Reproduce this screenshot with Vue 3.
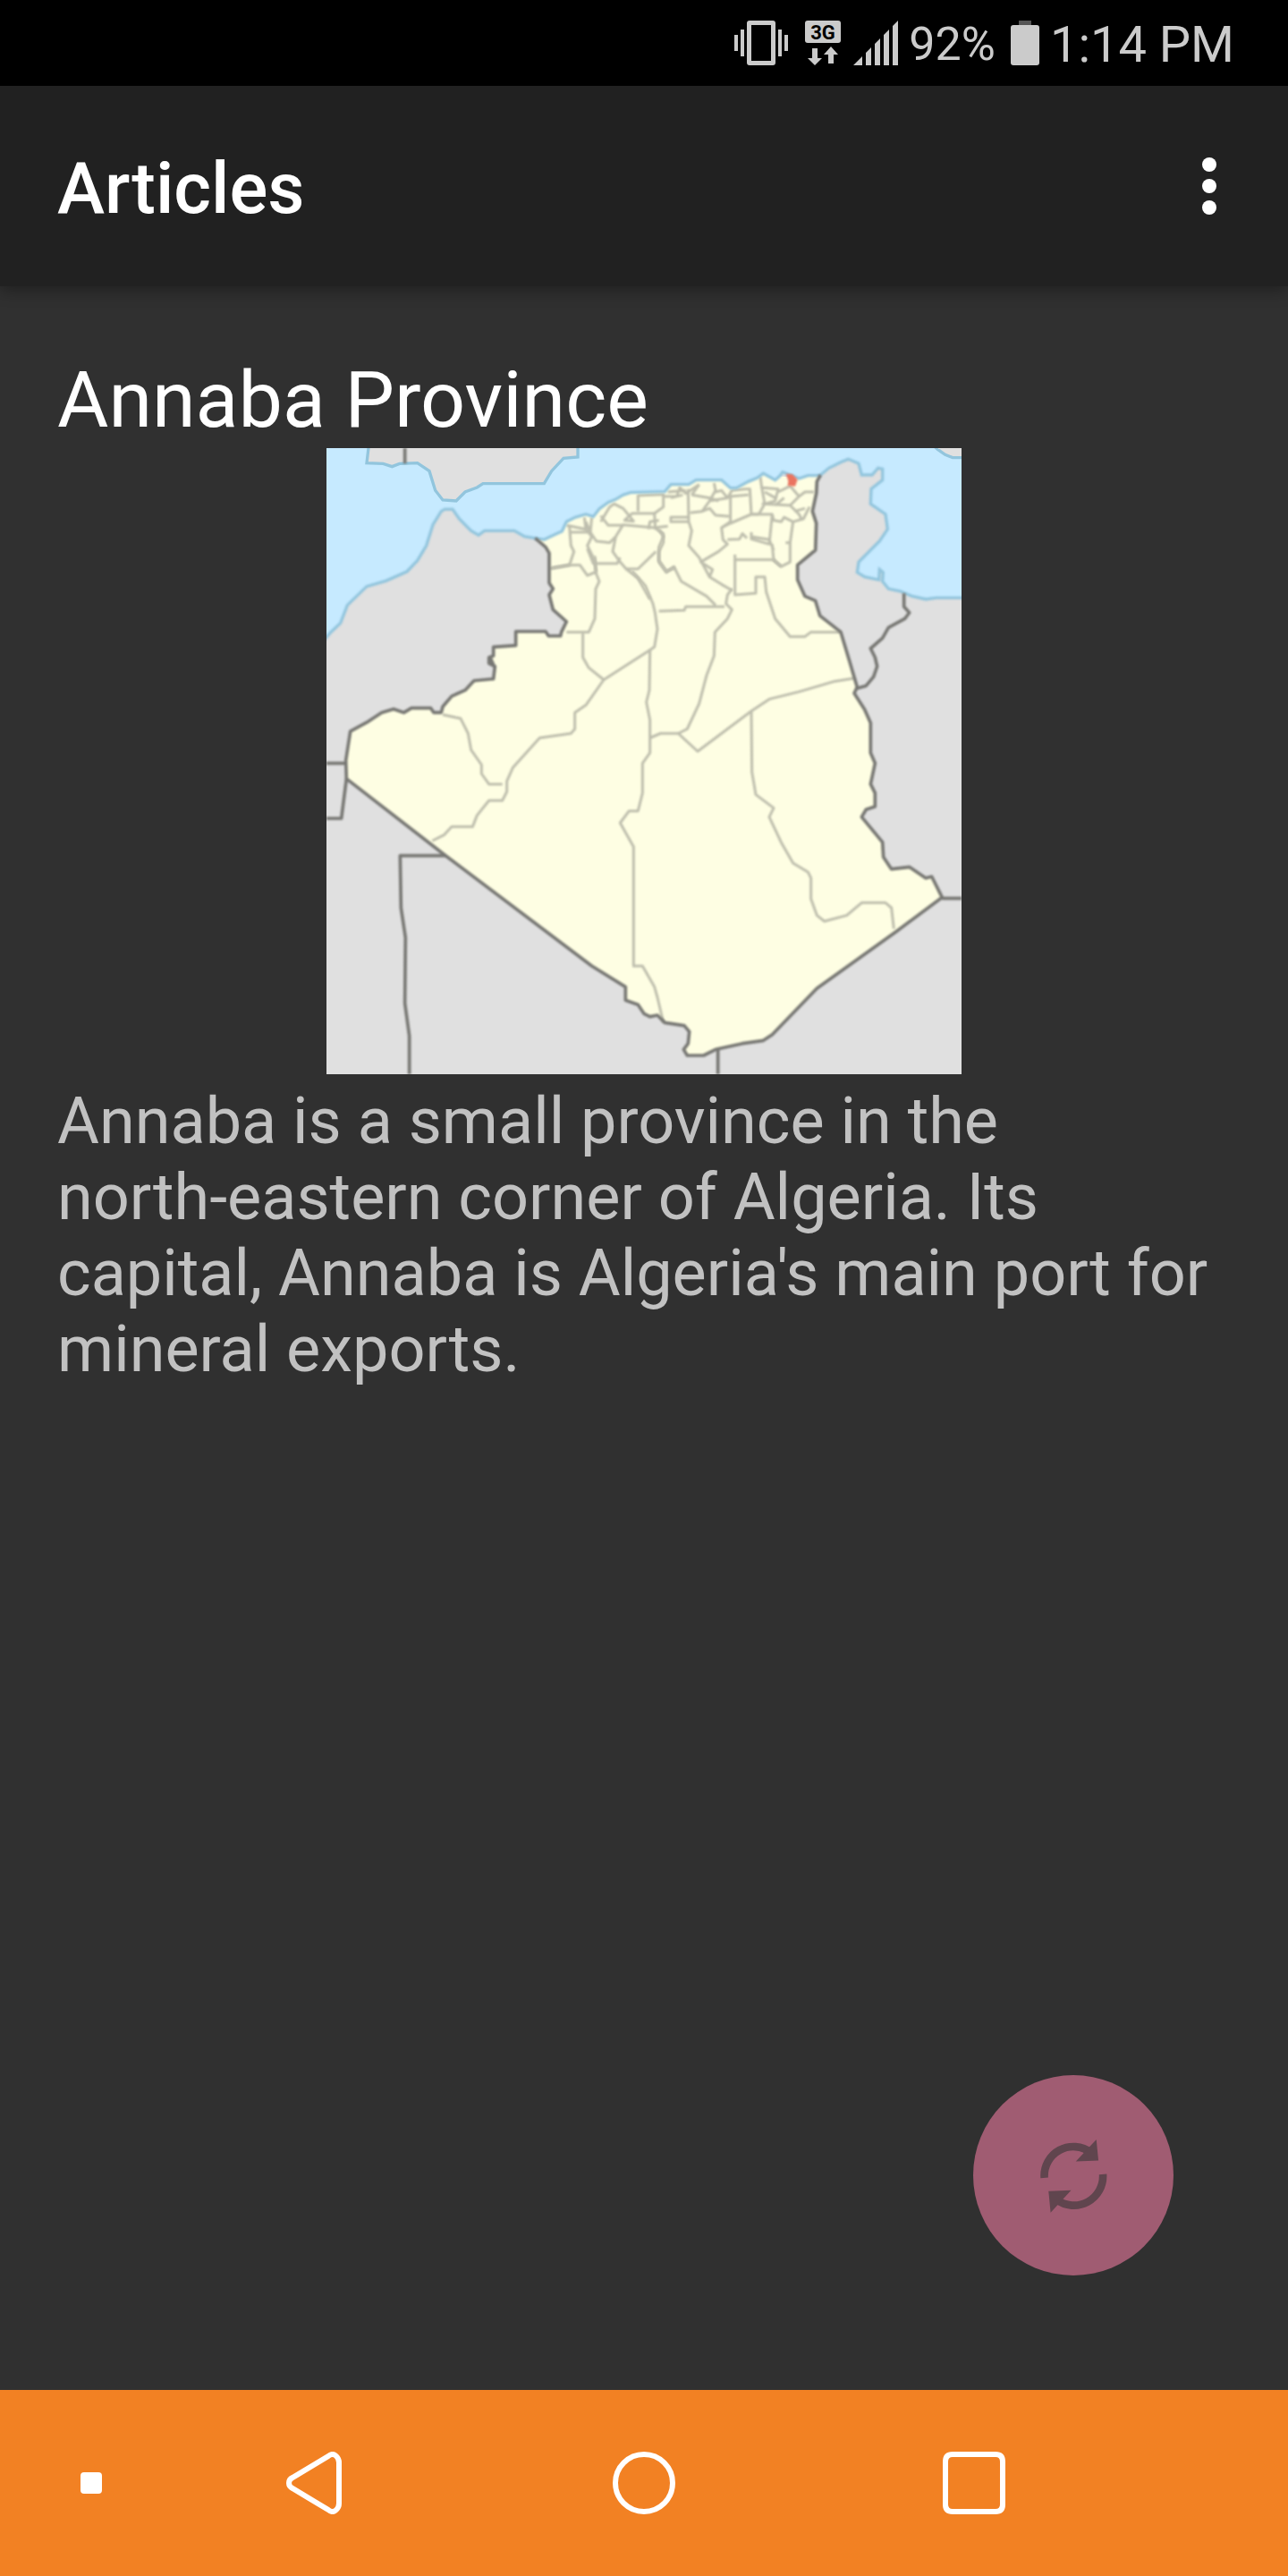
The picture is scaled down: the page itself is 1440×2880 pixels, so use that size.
<template>
  <div class="screen">
    <div class="status-bar">
      <svg class="vibrate" viewBox="0 0 60 50" aria-hidden="true">
        <path d="M0 16h4v18H0zM7 10h4v30H7zM49 10h4v30h-4zM56 16h4v18h-4z" />
        <path fill-rule="evenodd" d="M17 0H43Q46 0 46 3V47Q46 50 43 50H17Q14 50 14 47V3Q14 0 17 0ZM19 5V45H41V5Z" />
      </svg>
      <svg class="network" viewBox="0 0 40 50" aria-hidden="true">
        <rect width="40" height="25" rx="3" />
        <text x="20" y="21" text-anchor="middle">3G</text>
        <path d="M8 31H14V42H19L11 50L3 42H8ZM26 48V38H21L29 29L37 38H32V48Z" />
      </svg>
      <svg class="signal" viewBox="0 0 50 50" aria-hidden="true">
        <path d="M0 50L10 40V50ZM14 50V36L20 30V50ZM24 50V26L30 20V50ZM34 50V16L40 10V50ZM44 50V6L50 0V50Z" />
      </svg>
      <span class="percent">92%</span>
      <svg class="battery" viewBox="0 0 32 50" aria-hidden="true">
        <path class="battery-tip" d="M9 0H23V5H9Z" />
        <rect y="5" width="32" height="45" rx="3" />
      </svg>
      <span class="time">1:14 PM</span>
    </div>

    <header class="app-bar">
      <h1>Articles</h1>
      <button class="menu" type="button" aria-label="More options">
        <span></span>
        <span></span>
        <span></span>
      </button>
    </header>

    <main class="article">
      <h2>{{ article.title }}</h2>
      <svg class="map" viewBox="15 18 2130 2100" role="img" aria-label="Map of Algeria">
        <rect class="land" x="15" y="18" width="2130" height="2100" />
        <path class="sea" :d="`${westCoast}${algeriaCoast}${eastCoast}V0H0Z`" />
        <path
          class="land coast"
          d="M158 0L150 68L205 70L235 80L260 70L320 68L360 95L380 160L405 192L450 195L480 165L520 150L540 137H745L770 95L810 52L858 48V0Z"
        />
        <path class="land coast" d="M2040 0L2065 22L2090 40L2115 50H2160V0Z" />
        <path class="algeria" :d="`M715 320${algeriaCoast}L1560 115L1600 120L1630 110L1672 108${algeriaBorder}Z`" />
        <g class="province">
          <path d="M765 422L830 410H865L890 445L915 435" />
          <path d="M915 380L918 435L930 465L918 490L915 590L895 635H820" />
          <path d="M875 640V720L895 755L945 795" />
          <path d="M605 1145H560L535 1110V1080L500 1030L490 975L465 925L405 912" />
          <path d="M370 1335L410 1315L435 1288H505L520 1250L560 1200H605L620 1170V1135L640 1090L730 990L835 975L848 960V905L885 880L945 795L1100 695" />
          <path d="M1040 430L1085 480L1110 540L1117 570L1125 625L1115 685L1100 695L1098 830L1088 870L1100 930V1040L1075 1075V1175L1060 1235H1030L1000 1275L1045 1355V1755H1075L1115 1825L1125 1860L1145 1945" />
          <path d="M1100 990L1135 975H1195L1260 1035L1440 900L1500 860L1600 835L1720 800L1785 790" />
          <path d="M1440 900L1442 1105L1455 1180L1515 1225L1500 1255L1540 1340L1580 1410L1630 1440L1640 1460V1530L1660 1585L1685 1605L1760 1585L1810 1543H1890L1910 1560L1918 1630" />
          <path d="M1195 975L1225 960L1265 875L1290 780L1315 715L1318 635L1360 590L1375 560L1355 540L1360 510L1375 490" />
          <path d="M1130 565L1215 562L1220 550H1350" />
          <path d="M1385 375V510L1455 505V450H1485L1490 500L1520 590L1570 650H1620L1640 635H1740" />
          <path d="M1385 392H1515L1540 415" />
          <path d="M1130 290L1145 315L1130 350V400L1155 435L1180 415L1205 465L1290 515L1320 545" />
        </g>
        <g class="province" transform="translate(720 15)">
          <path d="M110 265L115 330L125 350L110 395L50 405" />
          <path d="M100 262L165 275L160 235M110 285H180L165 250" />
          <path d="M165 275L185 300L170 330L195 380L200 420" />
          <path d="M185 235L180 285L200 315L245 320L265 300L290 260L395 270L440 265" />
          <path d="M265 300L255 350L280 385L300 408H340L400 350" />
          <path d="M170 340L190 390H270L280 370" />
          <path d="M215 230L240 262L290 262" />
          <path d="M215 250L245 200L260 190L290 205L325 248L295 245L320 222L395 222L398 275" />
          <path d="M340 215V162L425 158V200L395 222M375 275L380 250L410 245" />
          <path d="M425 165L470 165L480 135L500 155L545 125M440 150L500 145M450 170L490 160" />
          <path d="M508 140L510 250L520 280L510 330L545 370L580 435" />
          <path d="M510 235H450V250H510" />
          <path d="M395 270L425 290V320L410 350V380L435 415L465 405" />
          <path d="M300 408L340 440L380 510" />
          <path d="M515 220L555 215L580 180L600 145L595 120M520 160L545 125M580 180L640 170L620 145L600 150" />
          <path d="M520 160L580 170L610 180M555 215L580 205L600 228L645 232M650 160V250" />
          <path d="M650 250L620 270L625 310L640 325L610 350L550 385L590 410L580 435L620 460L655 480" />
          <path d="M620 270L650 255L720 225H790L780 325L720 308V285" />
          <path d="M640 310L680 308L690 290L705 305M720 300L780 310L795 345" />
          <path d="M640 170L655 145L700 140L715 140L720 225L745 225M650 165L710 160" />
          <path d="M750 100L755 135L765 190L800 180L810 140L750 135M765 150L800 170" />
          <path d="M755 190L850 195L880 225L890 245M745 225L765 190M800 195L830 170" />
          <path d="M810 150L850 130L880 165L900 150H930M880 165L850 195M865 215L900 205" />
          <path d="M790 225L795 245L820 250L830 235L860 250L850 320V385L820 400L795 380L790 325" />
          <path d="M860 250L895 240L915 200M835 320H850" />
        </g>
        <path class="coast line" :d="`${westCoast}${algeriaCoast}${eastCoast}`" />
        <g class="border">
          <path :d="`M1672 108${algeriaBorder}`" />
          <path d="M565 722L575 745M278 18V70" />
          <path d="M15 1075H80M82 1127L65 1260H15" />
          <path d="M415 1385H262L265 1560L280 1660L278 1880L293 1990V2118" />
          <path d="M1328 2035V2118M2080 1528H2145" />
          <path d="M1952 505V550L1970 570L1955 590L1900 620L1880 655L1840 690L1855 720L1862 750L1850 785L1825 815L1790 825" />
        </g>
        <path class="annaba" d="M1556 104L1578 106L1595 124L1587 146L1562 144L1564 128Z" />
      </svg>
      <p>
        Annaba is a small province in the<br>
        north-eastern corner of Algeria. Its capital, Annaba is Algeria's main port for mineral exports.
      </p>
      <button class="refresh" type="button" aria-label="Next article">
        <svg viewBox="312 300 224 250">
          <path class="arc" d="M325 432A98 98 0 0 1 482 347" />
          <path d="M500 303L507 374L431 377Z" />
          <path class="arc" d="M522 420A98 98 0 0 1 365 505" />
          <path d="M346 549L339 477L415 474Z" />
        </svg>
      </button>
    </main>

    <nav class="nav-bar">
      <button class="dot" type="button" aria-label="Hide navigation bar">
        <span></span>
      </button>
      <button v-for="item in navItems" :key="item.label" type="button" :aria-label="item.label">
        <svg :viewBox="`0 0 ${item.width} 70`">
          <path :d="item.path" />
        </svg>
      </button>
    </nav>
  </div>
</template>

<script setup>
import { ref } from 'vue'

const article = ref({
  title: 'Annaba Province'
})

// Morocco, up to the Algerian border
const westCoast = 'M0 670L30 635L62 605L85 545L150 482L215 463L285 432L320 395L350 345L372 275L400 230L412 223H438L460 255L500 295L525 310L545 295H645L680 315'
const algeriaCoast = 'L745 325L780 308L805 297L820 265L850 250L885 240L910 248L930 222L960 200L985 190L1010 175L1035 167L1150 164L1170 140H1230L1255 125H1340L1370 152H1390L1430 130L1460 118L1480 103L1520 125L1535 112'
// Tunisia and Libya
const eastCoast = 'L1545 98L1600 120L1630 110H1670L1700 85L1740 65L1765 55L1800 70L1810 108H1845L1865 85L1880 88V125L1842 155L1840 205L1890 240L1897 290L1870 330L1800 400L1795 435L1820 450L1868 460L1870 425L1882 435L1880 465L1900 490L1940 498L1980 515L2025 525L2060 520H2160'
const algeriaBorder = 'L1660 130L1658 170L1645 230L1658 270L1655 360L1595 410V460L1620 515L1655 530L1670 580L1740 635L1770 735L1795 820L1785 840L1820 895L1840 940V1040L1855 1075L1840 1145L1855 1175V1220L1825 1230L1810 1255L1880 1340L1883 1390L1910 1430L1970 1423L2025 1460L2045 1455L2080 1525L1925 1640L1660 1830L1510 1985L1480 2005L1410 2015L1320 2035L1280 2055H1225L1213 2035L1228 2015L1232 1975L1215 1955L1150 1945L1125 1920L1100 1925L1080 1915L1060 1885L1018 1870V1825L905 1755L415 1385L82 1127L80 1065L95 968L150 938L200 905L240 893L275 905L300 890H365L375 905H400L405 885L435 850L480 830L510 798L575 792L580 750L560 740V720L575 715V685L650 680V633H750L760 648H800L803 635L820 600L775 560L762 510L775 490L762 470V370L750 350L715 320'

const navItems = [
  {
    label: 'Back',
    width: 62,
    path: 'M47 5Q52 1 56 5Q59 8 59 12V58Q59 62 56 65Q52 69 47 65L7 41Q3 39 3 35Q3 31 7 29Z'
  },
  {
    label: 'Home',
    width: 70,
    path: 'M35 3A32 32 0 0 1 35 67A32 32 0 0 1 35 3Z'
  },
  {
    label: 'Recent apps',
    width: 70,
    path: 'M11 3H59Q67 3 67 11V59Q67 67 59 67H11Q3 67 3 59V11Q3 3 11 3Z'
  }
]
</script>

<style>
body {
  margin: 0;
  background-color: #303030;
}
</style>

<style scoped>
.screen {
  display: flex;
  flex-direction: column;
  min-height: 100vh;
  background-color: #303030;
  font-family: Roboto, sans-serif;
}
button {
  display: flex;
  justify-content: center;
  align-items: center;
  margin: 0;
  padding: 0;
  border: none;
  background: none;
  cursor: pointer;
}
.status-bar {
  display: flex;
  justify-content: flex-end;
  align-items: center;
  height: 96px;
  padding-right: 60px;
  background-color: #000;
  color: #cbcbcb;
}
.status-bar svg {
  height: 50px;
  fill: #cbcbcb;
}
.status-bar span {
  padding-top: 3px;
}
.vibrate {
  width: 60px;
  margin-right: 19px;
}
.network {
  width: 40px;
  margin-right: 14px;
}
.network text {
  fill: #000;
  font-size: 22px;
  font-weight: 700;
}
.signal {
  width: 50px;
  margin-right: 12px;
}
.percent {
  margin-right: 17px;
  font-size: 52px;
}
.battery {
  width: 32px;
  margin-right: 12px;
}
.status-bar .battery-tip {
  fill: #555;
}
.time {
  font-size: 56px;
}
.app-bar {
  display: flex;
  justify-content: space-between;
  align-items: center;
  height: 224px;
  padding: 0 64px;
  background-color: #212121;
  box-shadow: 0 6px 16px rgba(0, 0, 0, 0.3);
}
h1 {
  margin: 0;
  padding-top: 6px;
  color: #fff;
  font-size: 80px;
  font-weight: 500;
}
.menu {
  flex-direction: column;
  gap: 8px;
  width: 48px;
  height: 96px;
}
.menu span {
  width: 16px;
  height: 16px;
  border-radius: 50%;
  background-color: #fff;
}
.article {
  position: relative;
  flex: 1;
  padding: 75px 64px 380px;
}
h2 {
  margin: 0 0 2px;
  color: #fff;
  font-size: 88px;
  font-weight: 400;
  line-height: 104px;
}
.map {
  display: block;
  width: 710px;
  max-width: 100%;
  margin: 0 auto;
}
.land {
  fill: #e0e0e0;
}
.sea {
  fill: #c6eaff;
}
.coast {
  stroke: #92c5dd;
  stroke-width: 10;
}
.line {
  fill: none;
}
.algeria {
  fill: #fefee3;
}
.province {
  fill: none;
  stroke: #bebead;
  stroke-width: 9;
  stroke-linejoin: round;
}
.border {
  fill: none;
  stroke: #777773;
  stroke-width: 11;
  stroke-linejoin: round;
}
.line,
.province,
.border,
.annaba {
  filter: blur(3px);
}
.annaba {
  fill: #ea7460;
}
p {
  margin: 10px 0 0;
  color: #c1c1c1;
  font-size: 72px;
  line-height: 85px;
}
.refresh {
  position: absolute;
  right: 128px;
  bottom: 128px;
  width: 224px;
  height: 224px;
  border-radius: 50%;
  background-color: #a05c72;
}
.refresh svg {
  width: 75px;
  height: 83px;
  fill: #60454e;
}
.refresh .arc {
  fill: none;
  stroke: #60454e;
  stroke-width: 26;
}
.nav-bar {
  display: grid;
  grid-template-columns: 167px 1fr 1fr 1fr 167px;
  height: 208px;
  background-color: #f28123;
}
.nav-bar .dot {
  justify-content: flex-start;
  padding-left: 90px;
}
.dot span {
  width: 24px;
  height: 24px;
  border-radius: 4px;
  background-color: #fff;
}
.nav-bar svg {
  height: 70px;
  fill: none;
  stroke: #fff;
  stroke-width: 6;
}
</style>
